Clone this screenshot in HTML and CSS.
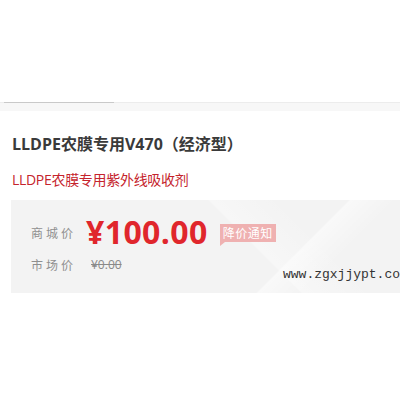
FILE: index.html
```html
<!DOCTYPE html>
<html lang="zh-CN">
<head>
    <meta charset="UTF-8">
    <title>LLDPE农膜专用V470</title>
    <link rel="stylesheet" href="styles.css">
</head>
<body>
    <div class="page">
        <div class="tabBar">
            <div class="tabLine"></div>
        </div>
        <div class="info">
            <h1 class="title">LLDPE农膜专用V470（经济型）</h1>
            <div class="subtitle">LLDPE农膜专用紫外线吸收剂</div>
            <div class="priceBox">
                <div class="row">
                    <span class="label">商城价</span>
                    <span class="price">¥100.00</span>
                    <span class="notify">降价通知</span>
                </div>
                <div class="row">
                    <span class="label">市场价</span>
                    <span class="oldPrice">¥0.00</span>
                </div>
                <div class="mark">www.zgxjjypt.co</div>
            </div>
        </div>
    </div>
</body>
</html>
```
FILE: styles.css
```css
:root{
    --red: #e0262c;
    --gray: #8f8f8f;
    --boxBg: #f3f3f3;
}
html, body{
    margin: 0;
    height: 100%;
    background: #ffffff;
    overflow: hidden;
}
body{
    font-family: "Noto Sans CJK SC", "Liberation Sans", sans-serif;
}
.page{
    padding-top: 102px;
}
.tabBar{
    height: 8px;
    background: #f7f7f7;
    border-top: 1px solid #ececec;
}
.tabLine{
    width: 110px;
    margin-left: 4px;
    margin-top: -1px;
    height: 1px;
    background: #c9c9c9;
}
.info{
    padding-left: 11px;
}
.title{
    margin: 22px 0 0 1px;
    font-size: 16px;
    line-height: 22px;
    font-weight: 700;
    color: #3a3a3a;
    font-family: "Open Sans", "Noto Sans CJK SC", sans-serif;
    letter-spacing: 0;
}
.subtitle{
    margin: 15px 0 0 1px;
    font-size: 14px;
    line-height: 20px;
    color: #c5232c;
    font-family: "Open Sans", "Noto Sans CJK SC", sans-serif;
    letter-spacing: -0.3px;
}
.priceBox{
    position: relative;
    margin-top: 10px;
    height: 93px;
    padding: 13px 0 0 20px;
    box-sizing: border-box;
    background:
        linear-gradient(135deg, transparent 70%, rgba(255,255,255,0.5) 70.5%, transparent 80%),
        linear-gradient(45deg, transparent 60%, rgba(255,255,255,0.35) 60.5%, transparent 75%),
        var(--boxBg);
}
.row{
    display: flex;
    align-items: center;
}
.label{
    width: 55px;
    font-size: 12px;
    color: var(--gray);
    letter-spacing: 3px;
}
.price{
    font-family: "Open Sans", sans-serif;
    font-size: 32px;
    font-weight: 700;
    line-height: 38px;
    color: var(--red);
    letter-spacing: 0.4px;
}
.notify{
    position: relative;
    margin-left: 12px;
    margin-top: 2px;
    padding: 0 3px;
    height: 18px;
    line-height: 18px;
    font-size: 12px;
    letter-spacing: 0.5px;
    color: #ffffff;
    background: #efb1b1;
}
.notify::after{
    content: "";
    position: absolute;
    left: 0;
    bottom: -4px;
    border-top: 4px solid #efb1b1;
    border-right: 5px solid transparent;
}
.oldPrice{
    margin-left: 5px;
    font-size: 12px;
    color: #8a8a8a;
    text-decoration: line-through;
    font-family: "Open Sans", sans-serif;
}
.row + .row{
    margin-top: 5px;
}
.mark{
    position: absolute;
    left: 272px;
    top: 67px;
    font-family: "Liberation Mono", monospace;
    font-size: 13px;
    color: #333333;
    white-space: nowrap;
}
```
